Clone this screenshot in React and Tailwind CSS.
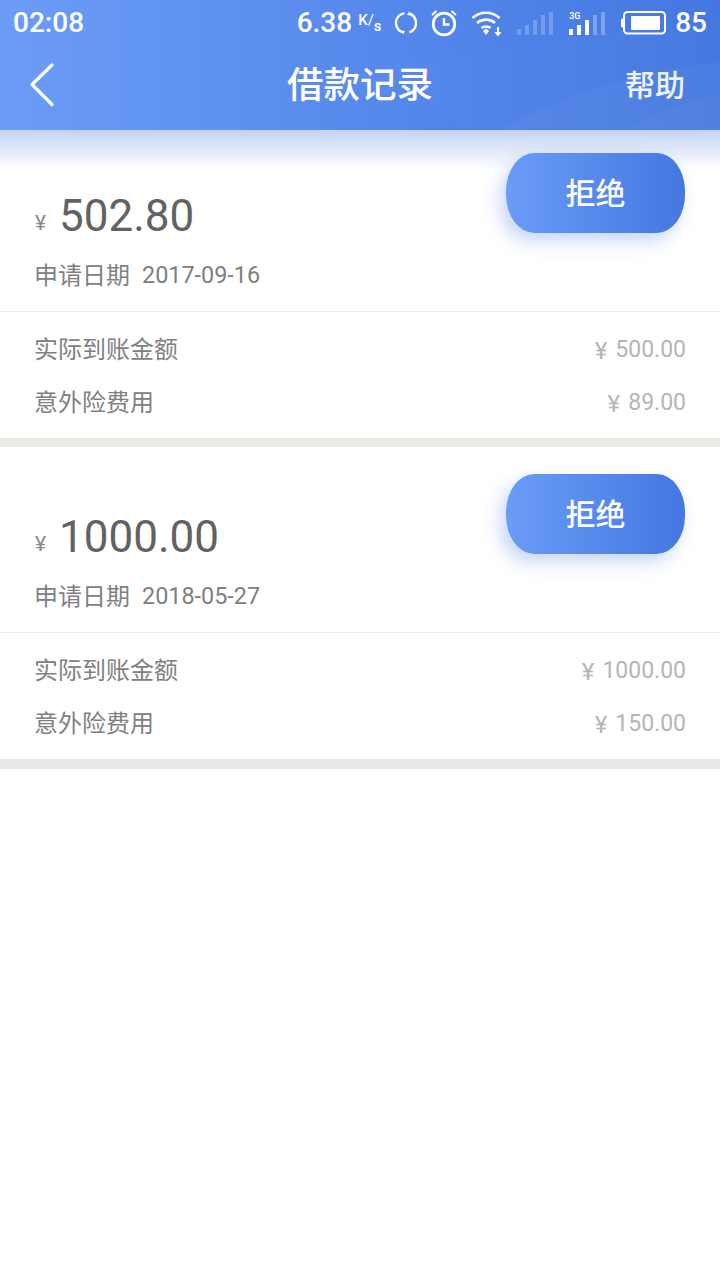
const CJK = "font-['Roboto','Noto_Sans_CJK_SC',sans-serif]";

const records = [
  { amount: "502.80", date: "2017-09-16", actual: "500.00", insurance: "89.00", gap: "h-[9px] bg-[#e8eae6]" },
  { amount: "1000.00", date: "2018-05-27", actual: "1000.00", insurance: "150.00", gap: "h-[10px] bg-[#e6e9e8]" },
];

// Signal bars, `lit` is how many are fully white
function Signal({ lit, dim }) {
  const heights = [6, 10, 15, 20, 23];
  return (
    <svg width="36" height="23" viewBox="0 0 36 23" className="block">
      {heights.map((h, i) => (
        <rect
          key={i}
          x={i * 8}
          y={23 - h}
          width="4"
          height={h}
          fill="#fff"
          opacity={i < lit ? 1 : dim}
        />
      ))}
    </svg>
  );
}

function StatusBar() {
  return (
    <div className="relative flex h-[45px] items-center justify-between pl-[13px] pr-[13px] font-medium text-[28px] text-white">
      <span className="leading-none">02:08</span>
      <div className="flex items-center">
        <span className="leading-none">6.38</span>
        <span className="ml-[6px] mt-[-4px] w-[24px] text-[15px] leading-none">
          K<span className="font-normal">/</span>
          <span className="relative top-[6px]">s</span>
        </span>
        <svg width="24" height="24" viewBox="0 0 24 24" fill="none" stroke="#fff" strokeWidth="2.4" className="ml-[12px]">
          <path d="M10.5 2.1 A10 10 0 0 0 9.5 21.7" />
          <path d="M15 2.5 A10 10 0 0 1 15.5 21.4" />
          <path d="M7.5 19.5 L11 20 L9 23.5Z" fill="#fff" stroke="none" />
          <path d="M16.5 4.5 L13 4 L15 0.5Z" fill="#fff" stroke="none" />
        </svg>
        <svg width="28" height="28" viewBox="0 0 28 28" fill="none" stroke="#fff" className="ml-[12px]">
          <circle cx="14" cy="15" r="10.8" strokeWidth="2.8" />
          <path d="M14 9v6.5h5.5" strokeWidth="2.4" />
          <path d="M2 6 L6.5 2 M26 6 L21.5 2" strokeWidth="2" />
        </svg>
        <svg width="32" height="28" viewBox="0 0 32 28" fill="none" stroke="#fff" strokeWidth="2.6" className="ml-[13px]">
          <path d="M1.5 9 C9 2 21 2 28.5 9" />
          <path d="M6 14 C11 9.5 19 9.5 24 14" />
          <path d="M10.5 19 C13 17 17 17 19.5 19" />
          <path d="M12 22 L15 19.5 L18 22 L15 26Z" fill="#fff" stroke="none" />
          <path d="M27 18v7" strokeWidth="2" />
          <path d="M23.5 23 H30.5 L27 27.5Z" fill="#fff" stroke="none" />
        </svg>
        <div className="ml-[14px] mt-[2px]">
          <Signal lit={0} dim={0.22} />
        </div>
        <div className="relative ml-[16px] mt-[2px]">
          <span className="absolute left-0 top-0 text-[9px] leading-none">3G</span>
          <Signal lit={3} dim={0.28} />
        </div>
        <svg width="45" height="24" viewBox="0 0 45 24" fill="none" className="ml-[16px] mt-[1px]">
          <rect x="0" y="7.5" width="3" height="9" rx="1.5" fill="#fff" />
          <rect x="3" y="1" width="41" height="21.5" rx="3.5" stroke="#fff" strokeWidth="2" />
          <rect x="10" y="5" width="29" height="14" rx="1" fill="#fff" />
        </svg>
        <span className="ml-[9px] leading-none">85</span>
      </div>
    </div>
  );
}

function Header() {
  return (
    <header className="relative z-10 h-[130px] bg-gradient-to-r from-[#6b9cf8] to-[#4477e0]">
      {/* faint swooshes in the background of the bar */}
      <svg className="absolute inset-0" width="720" height="130" viewBox="0 0 720 130" fill="none">
        <path d="M330 80 C450 50 590 35 720 20 V130 H470 C430 105 390 90 330 80Z" fill="#fff" opacity="0.015" />
        <path d="M500 130 C570 90 650 70 720 62 V130Z" fill="#fff" opacity="0.03" />
        <path d="M625 130 C655 112 690 100 720 94 V130Z" fill="#fff" opacity="0.025" />
      </svg>
      <StatusBar />
      <div className="relative flex h-[85px] items-center justify-between pl-[30px] pr-[35px] text-white">
        <svg width="24" height="44" viewBox="0 0 24 44" fill="none" stroke="#fff" strokeWidth="3.2" strokeLinecap="round" strokeLinejoin="round" className="mt-[-6px]">
          <path d="M22 2 L2 21.5 L22 41.5" />
        </svg>
        <h1 className={`absolute left-0 right-0 mt-[-2px] text-center text-[36.5px] font-medium leading-none ${CJK}`}>借款记录</h1>
        <span className={`mt-[-4px] text-[30px] font-medium leading-none text-[#eef3fe] ${CJK}`}>帮助</span>
      </div>
      {/* soft shadow falling on the content */}
      <div className="absolute left-0 right-0 top-full h-[40px] bg-gradient-to-b from-[#c3d3f4] to-white/0" />
    </header>
  );
}

function Money({ value }) {
  return (
    <span className="mt-[2px] flex items-center text-[23px] text-[#b5b5b5]">
      <span className="mr-[8px] text-[24px] leading-none">¥</span>
      {value}
    </span>
  );
}

function RecordCard({ record }) {
  return (
    <>
      <div className="bg-white">
        <div className="flex h-[185px] justify-between pr-[35px]">
          <div className="pl-[34px] pt-[64px]">
            <div className="flex h-[52px] items-center text-[#626262]">
              <span className="ml-px mt-[14px] w-[24px] text-[21px] leading-none text-[#8a8a8a]">¥</span>
              <span className="text-[44px] leading-none">{record.amount}</span>
            </div>
            <div className={`mt-[18px] flex h-[32px] items-center text-[#808080] ${CJK}`}>
              <span className="w-[108px] text-[24px] leading-none">申请日期</span>
              <span className="text-[23.4px] leading-none">{record.date}</span>
            </div>
          </div>
          <button className={`relative z-20 mt-[27px] h-[80px] w-[179px] rounded-[28px/38px] bg-gradient-to-r from-[#6b9cf8] to-[#4477e0] text-[30px] font-medium text-white shadow-[-6px_8px_18px_rgba(70,120,225,0.3)] ${CJK}`}>
            拒绝
          </button>
        </div>
        <div className="h-px bg-[#ebebeb]" />
        <div className={`pb-[9px] pl-[34px] pr-[34px] pt-[11px] text-[24px] ${CJK}`}>
          <div className="flex h-[53px] items-center justify-between">
            <span className="text-[#808080]">实际到账金额</span>
            <Money value={record.actual} />
          </div>
          <div className="flex h-[53px] items-center justify-between">
            <span className="text-[#808080]">意外险费用</span>
            <Money value={record.insurance} />
          </div>
        </div>
      </div>
      <div className={record.gap} />
    </>
  );
}

export default function App() {
  return (
    <div className="h-[1280px] w-[720px] overflow-hidden bg-white font-['Roboto',sans-serif]">
      <Header />
      <main className="relative mt-[-4px]">
        {records.map((record) => (
          <RecordCard key={record.date} record={record} />
        ))}
      </main>
    </div>
  );
}
